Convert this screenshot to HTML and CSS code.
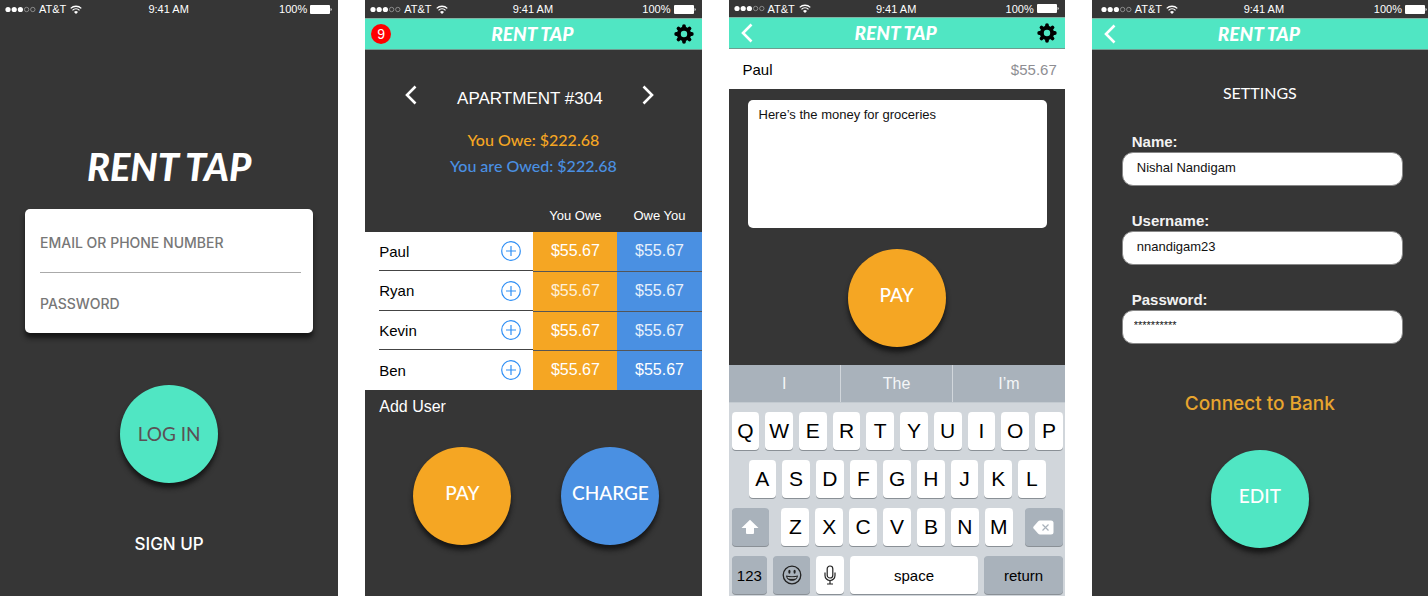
FILE: index.html
```html
<!DOCTYPE html>
<html lang="en">
<head>
<meta charset="utf-8">
<title>Rent Tap</title>
<link rel="stylesheet" href="styles.css">
</head>
<body>
<svg class="defs" aria-hidden="true">
  <symbol id="dots" viewBox="0 0 31 7">
    <g fill="#fff"><circle cx="3" cy="3.5" r="2.6"/><circle cx="9.2" cy="3.5" r="2.6"/><circle cx="15.4" cy="3.5" r="2.6"/></g>
    <g fill="none" stroke="#aaa" stroke-width=".7"><circle cx="21.6" cy="3.5" r="2.2"/><circle cx="27.8" cy="3.5" r="2.2"/></g>
  </symbol>
  <symbol id="wifi" viewBox="0 0 12 9">
    <g fill="none" stroke="#fff" stroke-width="1.3"><path d="M.7 3.4a7.6 7.6 0 0 1 10.6 0"/><path d="M2.5 5.4a5 5 0 0 1 7 0"/></g>
    <path d="M6 9 4 7a2.8 2.8 0 0 1 4 0z" fill="#fff"/>
  </symbol>
  <symbol id="battery" viewBox="0 0 22 9">
    <rect width="20" height="9" rx="1" fill="#fff"/><path d="M20.6 3a1.6 1.6 0 0 1 0 3z" fill="#fff"/>
  </symbol>
  <symbol id="gear" viewBox="0 0 20 20">
    <g fill="none" stroke="#000">
      <circle cx="10" cy="10" r="5.200" stroke-width="4"/>
      <path d="M10 3V2.200M10 17v.8M3 10h-.8M17 10h.8M5 5l-.5-.5M15 15l.5.5M15 5l.5-.5M5 15l-.5.5" stroke-width="3.800" stroke-linecap="round"/>
    </g>
  </symbol>
  <symbol id="left" viewBox="0 0 12 20"><path d="M10.500 1.500 2 10l8.500 8.500" fill="none" stroke="#fff" stroke-width="2.600"/></symbol>
  <symbol id="right" viewBox="0 0 12 20"><path d="M1.500 1.500 10 10l-8.500 8.500" fill="none" stroke="#fff" stroke-width="2.600"/></symbol>
  <symbol id="plus" viewBox="0 0 20 20"><g fill="none" stroke="#2f8ff5" stroke-width="1.200"><circle cx="10" cy="10" r="9.300"/><path d="M10 5v10M5 10h10"/></g></symbol>
</svg>
<main class="board">

  <section class="screen">
    <div class="status">
      <span class="carrier"><svg class="dots"><use href="#dots"/></svg>AT&amp;T<svg class="wifi"><use href="#wifi"/></svg></span>
      <span>9:41 AM</span>
      <span class="power">100%<svg class="battery"><use href="#battery"/></svg></span>
    </div>
    <form class="login">
      <h1 class="brand brand-large">RENT TAP</h1>
      <div class="login-card">
        <input class="login-field" type="text" placeholder="EMAIL OR PHONE NUMBER" aria-label="Email or phone number">
        <input class="login-field" type="password" placeholder="PASSWORD" aria-label="Password">
      </div>
      <button class="round teal dark-text" type="button">LOG IN</button>
      <a class="signup" href="#">SIGN UP</a>
    </form>
  </section>

  <section class="screen">
    <div class="status">
      <span class="carrier"><svg class="dots"><use href="#dots"/></svg>AT&amp;T<svg class="wifi"><use href="#wifi"/></svg></span>
      <span>9:41 AM</span>
      <span class="power">100%<svg class="battery"><use href="#battery"/></svg></span>
    </div>
    <header class="bar">
      <span class="badge">9</span>
      <h2 class="brand">RENT TAP</h2>
      <button class="icon-button end" type="button" aria-label="Settings"><svg class="gear"><use href="#gear"/></svg></button>
    </header>
    <div class="switcher">
      <button class="icon-button" type="button" aria-label="Previous"><svg class="chevron"><use href="#left"/></svg></button>
      <h3 class="apartment">APARTMENT #304</h3>
      <button class="icon-button" type="button" aria-label="Next"><svg class="chevron"><use href="#right"/></svg></button>
    </div>
    <p class="total owe">You Owe: $222.68</p>
    <p class="total owed">You are Owed: $222.68</p>
    <table class="ledger">
      <thead><tr><td></td><th>You Owe</th><th>Owe You</th></tr></thead>
      <tbody>
        <tr><td><div class="person">Paul<button class="icon-button" type="button" aria-label="Add for Paul"><svg class="plus"><use href="#plus"/></svg></button></div></td><td class="amount strong">$55.67</td><td class="amount">$55.67</td></tr>
        <tr><td><div class="person">Ryan<button class="icon-button" type="button" aria-label="Add for Ryan"><svg class="plus"><use href="#plus"/></svg></button></div></td><td class="amount">$55.67</td><td class="amount">$55.67</td></tr>
        <tr><td><div class="person">Kevin<button class="icon-button" type="button" aria-label="Add for Kevin"><svg class="plus"><use href="#plus"/></svg></button></div></td><td class="amount strong">$55.67</td><td class="amount">$55.67</td></tr>
        <tr><td><div class="person">Ben<button class="icon-button" type="button" aria-label="Add for Ben"><svg class="plus"><use href="#plus"/></svg></button></div></td><td class="amount strong">$55.67</td><td class="amount strong">$55.67</td></tr>
      </tbody>
    </table>
    <a class="add-user" href="#">Add User</a>
    <div class="actions">
      <button class="round orange" type="button">PAY</button>
      <button class="round blue" type="button">CHARGE</button>
    </div>
  </section>

  <section class="screen payment">
    <div class="status">
      <span class="carrier"><svg class="dots"><use href="#dots"/></svg>AT&amp;T<svg class="wifi"><use href="#wifi"/></svg></span>
      <span>9:41 AM</span>
      <span class="power">100%<svg class="battery"><use href="#battery"/></svg></span>
    </div>
    <header class="bar">
      <button class="icon-button back" type="button" aria-label="Back"><svg class="chevron"><use href="#left"/></svg></button>
      <h2 class="brand">RENT TAP</h2>
      <button class="icon-button end" type="button" aria-label="Settings"><svg class="gear"><use href="#gear"/></svg></button>
    </header>
    <div class="payee"><span>Paul</span><span class="payee-sum">$55.67</span></div>
    <textarea class="note" aria-label="Note">Here’s the money for groceries</textarea>
    <button class="round orange" type="button">PAY</button>
    <div class="keyboard">
      <div class="suggestions"><button type="button">I</button><button type="button">The</button><button type="button">I’m</button></div>
      <div class="keys">
        <div class="key-row"><button class="key">Q</button><button class="key">W</button><button class="key">E</button><button class="key">R</button><button class="key">T</button><button class="key">Y</button><button class="key">U</button><button class="key">I</button><button class="key">O</button><button class="key">P</button></div>
        <div class="key-row inset"><button class="key">A</button><button class="key">S</button><button class="key">D</button><button class="key">F</button><button class="key">G</button><button class="key">H</button><button class="key">J</button><button class="key">K</button><button class="key">L</button></div>
        <div class="key-row letters-third">
          <button class="key gray" aria-label="Shift"><svg class="shift" viewBox="0 0 18 16"><path d="M9 .8 17.500 9H13v5q0 1-1 1H6q-1 0-1-1V9H.5z" fill="#fff"/></svg></button>
          <div class="key-group"><button class="key">Z</button><button class="key">X</button><button class="key">C</button><button class="key">V</button><button class="key">B</button><button class="key">N</button><button class="key">M</button></div>
          <button class="key gray" aria-label="Delete"><svg class="delete" viewBox="0 0 21 15"><path d="M7 .5h11q2.500 0 2.500 2.500v9q0 2.500-2.500 2.500H7q-1 0-2-1L.6 8.500q-.8-1 0-2L5 1.500q1-1 2-1z" fill="#fff"/><path d="m9.500 4.500 6 6m0-6-6 6" stroke="#a9b2bb" stroke-width="1.200"/></svg></button>
        </div>
        <div class="key-row bottom">
          <button class="key gray word">123</button>
          <button class="key gray" aria-label="Emoji"><svg class="emoji" viewBox="0 0 20 20"><circle cx="10" cy="10" r="8.800" fill="none" stroke="#222" stroke-width="1.300"/><ellipse cx="7.400" cy="6.800" rx="1.100" ry="2" fill="#222"/><ellipse cx="12.600" cy="6.800" rx="1.100" ry="2" fill="#222"/><path d="M4 10.500q6 1.400 12 0c-.6 7-11.400 7-12 0z" fill="#222"/><path d="M5.300 11.800q4.700 1 9.400 0l-.6 1.500q-4.100 1-8.200 0z" fill="#c3cad0"/></svg></button>
          <button class="key" aria-label="Dictate"><svg class="mic" viewBox="0 0 12 20"><g fill="none" stroke="#222" stroke-width="1.200"><rect x="3.200" y="1" width="5.600" height="12" rx="2.800"/><path d="M1 7.500v3a5 5 0 0 0 10 0v-3M6 15.500V19M3 19h6"/></g></svg></button>
          <button class="key word">space</button>
          <button class="key gray word">return</button>
        </div>
      </div>
    </div>
  </section>

  <section class="screen settings">
    <div class="status">
      <span class="carrier"><svg class="dots"><use href="#dots"/></svg>AT&amp;T<svg class="wifi"><use href="#wifi"/></svg></span>
      <span>9:41 AM</span>
      <span class="power">100%<svg class="battery"><use href="#battery"/></svg></span>
    </div>
    <header class="bar">
      <button class="icon-button back" type="button" aria-label="Back"><svg class="chevron"><use href="#left"/></svg></button>
      <h2 class="brand">RENT TAP</h2>
    </header>
    <h3 class="settings-title">SETTINGS</h3>
    <form class="profile">
      <div class="fields">
        <div class="field"><label for="name">Name:</label><input id="name" type="text" value="Nishal Nandigam"></div>
        <div class="field"><label for="username">Username:</label><input id="username" type="text" value="nnandigam23"></div>
        <div class="field"><label for="password">Password:</label><input id="password" class="masked" type="text" value="**********"></div>
      </div>
      <a class="connect" href="#">Connect to Bank</a>
      <button class="round teal" type="button">EDIT</button>
    </form>
  </section>

</main>
</body>
</html>
```
FILE: styles.css
```css
* { box-sizing: border-box; }

body {
  margin: 0;
  background: #fff;
  font-family: "Liberation Sans", Arial, sans-serif;
  color: #fff;
}

h1, h2, h3, p { margin: 0; font-weight: 400; }
button { padding: 0; border: 0; background: none; font: inherit; color: inherit; cursor: pointer; }
a { color: inherit; text-decoration: none; }
svg { display: block; flex: none; }
.defs { display: none; }

.board {
  display: grid;
  grid-template-columns: 338fr 336fr 336fr 336fr;
  gap: 27px;
  min-height: 100vh;
}

.screen {
  display: flex;
  flex-direction: column;
  min-width: 0;
  background: #363636;
}

/* Phone status line */
.status {
  display: grid;
  grid-template-columns: 1fr auto 1fr;
  align-items: center;
  height: 18px;
  padding: 0 6px 0 5px;
  font-size: 11px;
  line-height: 16px;
}
.carrier, .power { display: flex; align-items: center; gap: 3px; }
.power { justify-content: flex-end; }
.dots { width: 31px; height: 7px; }
.wifi { width: 12px; height: 9px; margin-left: 1px; }
.battery { width: 22px; height: 9px; }
.payment .status { height: 17px; }
.settings .status { padding: 0 1px 0 9px; }

/* Title bar */
.bar {
  display: grid;
  grid-template-columns: 1fr auto 1fr;
  align-items: center;
  height: 32px;
  padding: 0 8px 0 6px;
  background: #50e6c3;
  border-top: 1px solid #7fb5a5;
  border-bottom: 1px solid #6f9c90;
}
.brand {
  font-family: Lato, sans-serif;
  font-size: 19px;
  line-height: 28px;
  font-weight: 900;
  font-style: italic;
}
.icon-button { display: flex; align-items: center; }
.icon-button.end { justify-self: end; }
.icon-button.back { padding-left: 6px; }
.gear { width: 20px; height: 20px; }
.chevron { width: 12px; height: 20px; }
.badge {
  width: 20px;
  height: 20px;
  border-radius: 50%;
  background: #f00;
  font-size: 14px;
  line-height: 20px;
  text-align: center;
}

/* Circular actions */
.round {
  flex: none;
  align-self: center;
  width: 98px;
  height: 98px;
  padding-bottom: 6px;
  border-radius: 50%;
  box-shadow: 0 5px 5px #161616;
  font-family: Lato, sans-serif;
  font-size: 19px;
  line-height: 24px;
}
.teal { background: #50e6c3; }
.orange { background: #f5a623; }
.blue { background: #4a90e2; }
.dark-text { padding: 0; color: #5b5055; }
.orange, .blue, .profile .round { font-weight: 500; }

/* Login */
.login {
  display: flex;
  flex-direction: column;
  align-items: center;
  padding: 120px 25px 0;
}
.brand-large { font-size: 38px; line-height: 56px; }
.login-card {
  width: 100%;
  margin: 15px 0 52px;
  padding: 4px 12px 0 15px;
  height: 124px;
  background: #fff;
  border-radius: 5px;
  box-shadow: 0 5px 5px #161616;
}
.login-field {
  display: block;
  width: 100%;
  height: 60px;
  padding: 0;
  border: 0;
  outline: 0;
  background: none;
  font: 500 14px/20px Inter, sans-serif;
  color: #333;
}
.login-field:first-child { border-bottom: 1px solid #aaa; }
.login-field::placeholder { color: #777; opacity: 1; }
.signup { margin-top: 49px; font: 500 17px/24px Inter, sans-serif; }

/* Apartment overview */
.switcher {
  display: flex;
  justify-content: space-between;
  align-items: flex-start;
  padding: 35px 47px 0 40px;
}
.apartment { font-size: 17px; line-height: 28px; }
.total {
  font-family: Lato, sans-serif;
  font-size: 16px;
  line-height: 26px;
  font-weight: 500;
  text-align: center;
}
.switcher + .total { margin-top: 14px; }
.owe { color: #f5a623; }
.owed { color: #4a90e2; }
.ledger {
  width: 100%;
  margin-top: 21px;
  border-collapse: collapse;
  table-layout: fixed;
}
.ledger td, .ledger th { padding: 0; }
.ledger th { width: 25%; height: 32px; font-size: 13px; line-height: 16px; font-weight: 400; }
.ledger tbody tr { height: 39px; background: #fff; color: #000; }
.ledger tbody tr:nth-child(even) { height: 40px; }
.person {
  display: flex;
  justify-content: space-between;
  align-items: center;
  height: 39px;
  margin-left: 14px;
  padding-right: 12px;
  font-size: 15px;
}
tr:not(:last-child) .person { border-bottom: 1px solid #444; }
tr:not(:last-child) .amount { border-bottom: 1px solid #555; }
tr:nth-child(even) .person { height: 40px; }
.plus { width: 20px; height: 20px; }
.amount { background: #4a90e2; color: #e8f1fb; font-size: 16px; text-align: center; }
.amount:nth-child(2) { background: #f5a623; color: #fdf0da; }
.amount.strong, .amount.strong:nth-child(2) { color: #fff; }
.add-user { padding: 5px 14px; font-size: 16px; line-height: 24px; }
.actions { display: flex; justify-content: center; gap: 50px; padding: 23px 0 0 6px; }

/* Payment */
.payee {
  display: flex;
  justify-content: space-between;
  align-items: center;
  height: 40px;
  padding: 0 8px 0 14px;
  background: #fff;
  color: #000;
  font-size: 15px;
}
.payee-sum { color: #8e8e93; }
.note {
  height: 128px;
  margin: 11px 18px 21px 19px;
  padding: 7px 11px;
  border: 0;
  border-radius: 5px;
  outline: 0;
  resize: none;
  background: #fff;
  color: #111;
  font: 13px/16px "Liberation Sans", Arial, sans-serif;
}
.keyboard { margin-top: auto; background: #d1d6db; }
.suggestions { display: grid; grid-template-columns: repeat(3, 1fr); gap: 1px; border-bottom: 1px solid #c3cad0; }
.suggestions button { height: 37px; background: #a9b2bb; color: #f4f6f8; font-size: 16px; }
.keys { display: grid; gap: 10px; padding: 9px 2px 2px 3px; }
.key-row { display: grid; grid-template-columns: repeat(10, 1fr); gap: 6px; }
.key-row.inset { grid-template-columns: repeat(9, 1fr); padding: 0 17px; }
.key-row.letters-third { grid-template-columns: 38fr 232fr 38fr; gap: 12px; }
.key-row.bottom { grid-template-columns: 36fr 37fr 28fr 130fr 79fr; }
.key-group { display: grid; grid-template-columns: repeat(7, 1fr); gap: 6px; }
.key {
  display: flex;
  align-items: center;
  justify-content: center;
  min-width: 0;
  height: 38px;
  border-radius: 4px;
  background: #fff;
  box-shadow: 0 1px 0 #8a9096;
  color: #000;
  font-size: 21px;
}
.key.gray { background: #a9b2bb; }
.key.word { font-size: 15px; }
.shift { width: 18px; height: 16px; }
.delete { width: 21px; height: 15px; }
.emoji { width: 20px; height: 20px; }
.mic { width: 12px; height: 20px; }

/* Settings */
.settings-title {
  margin-top: 31px;
  font-family: Lato, sans-serif;
  font-size: 16px;
  line-height: 24px;
  text-align: center;
}
.profile { display: flex; flex-direction: column; padding-top: 27px; }
.fields { padding: 0 25px 0 30px; }
.field { display: flex; flex-direction: column; margin-bottom: 25px; }
.field label { padding-left: 10px; font-size: 15px; line-height: 20px; font-weight: 700; color: #f2f2f2; }
.field input {
  width: 100%;
  height: 34px;
  padding: 0 14px 4px;
  border: 1px solid #888;
  border-radius: 11px;
  outline: 0;
  background: #fff;
  color: #111;
  font: 13px/16px "Liberation Sans", Arial, sans-serif;
}
.field .masked { padding: 0 11px 4px; font-size: 11px; }
.connect {
  margin: 22px 0 33px;
  font: 500 19px/26px Inter, sans-serif;
  text-align: center;
  color: #e8a52e;
}
```
